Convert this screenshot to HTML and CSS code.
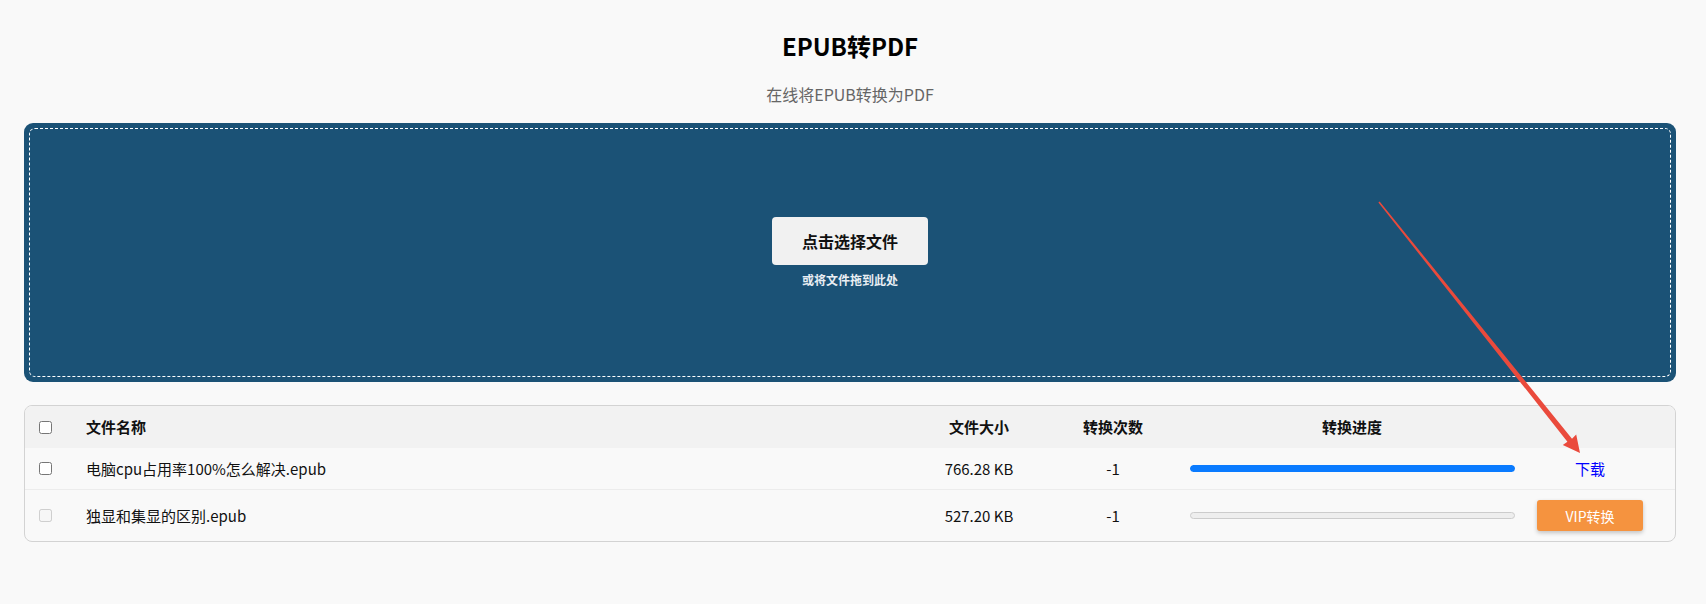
FILE: index.html
```html
<!DOCTYPE html>
<html lang="zh-CN">
<head>
<meta charset="utf-8">
<title>EPUB转PDF</title>
<link rel="stylesheet" href="styles.css">
</head>
<body>
<div class="page">
  <header class="head">
    <h1 class="title">EPUB转PDF</h1>
    <p class="subtitle">在线将EPUB转换为PDF</p>
  </header>

  <section class="dropzone">
    <div class="dropzone-inner">
      <button class="pick-btn" type="button">点击选择文件</button>
      <div class="drop-hint">或将文件拖到此处</div>
    </div>
  </section>

  <section class="file-table">
    <div class="row row-head">
      <div class="cell cell-check"><input type="checkbox"></div>
      <div class="cell cell-name">文件名称</div>
      <div class="cell cell-center">文件大小</div>
      <div class="cell cell-center">转换次数</div>
      <div class="cell cell-center">转换进度</div>
      <div class="cell cell-center"></div>
    </div>
    <div class="row row-file">
      <div class="cell cell-check"><input type="checkbox"></div>
      <div class="cell cell-name">电脑cpu占用率100%怎么解决.epub</div>
      <div class="cell cell-center">766.28 KB</div>
      <div class="cell cell-center">-1</div>
      <div class="cell cell-center"><div class="progress"><div class="progress-fill" style="width:100%"></div></div></div>
      <div class="cell cell-center"><a class="download" href="#">下载</a></div>
    </div>
    <div class="row row-file row-last">
      <div class="cell cell-check"><input type="checkbox" disabled></div>
      <div class="cell cell-name">独显和集显的区别.epub</div>
      <div class="cell cell-center">527.20 KB</div>
      <div class="cell cell-center">-1</div>
      <div class="cell cell-center"><div class="progress progress-empty"></div></div>
      <div class="cell cell-center"><button class="vip-btn" type="button">VIP转换</button></div>
    </div>
  </section>
</div>

<svg class="arrow-overlay" width="1706" height="604" viewBox="0 0 1706 604">
  <polygon fill="#ea4a3c" points="1379.6,201.5 1572,438.7 1576.2,434.4 1580,453 1562.8,445 1567.4,441.8 1378.4,202.5"/>
</svg>
</body>
</html>
```

FILE: styles.css
```css
* {
  box-sizing: border-box;
}

html, body {
  margin: 0;
  padding: 0;
  background: #f9f9f9;
}

body {
  font-family: "Noto Sans CJK SC", "Noto Sans", sans-serif;
  color: #111;
  position: relative;
  width: 1706px;
  height: 604px;
  overflow: hidden;
}

.page {
  width: 1652px;
  margin-left: 24px;
  padding-top: 30px;
}

.head {
  text-align: center;
}

.title {
  margin: 0;
  font-size: 24px;
  line-height: 32px;
  font-weight: 700;
  color: #000;
}

.subtitle {
  margin: 22px 0 0;
  font-size: 16px;
  line-height: 20px;
  color: #666;
}

.dropzone {
  margin-top: 19px;
  height: 259px;
  background: #1b5276;
  border-radius: 9px;
  padding: 5px;
}

.dropzone-inner {
  height: 100%;
  border: 1px dashed #ffffff;
  border-radius: 6px;
  display: flex;
  flex-direction: column;
  align-items: center;
  justify-content: center;
}

.pick-btn {
  font-family: inherit;
  font-size: 16px;
  font-weight: 700;
  line-height: 24px;
  color: #111;
  background: #f1f1f1;
  border: none;
  border-radius: 4px;
  padding: 12px 30px;
  width: 156px;
  height: 48px;
  cursor: pointer;
}

.drop-hint {
  margin-top: 6px;
  font-size: 12px;
  line-height: 17px;
  font-weight: 700;
  color: #e9eef3;
}

.file-table {
  margin-top: 23px;
  border: 1px solid #d3d3d3;
  border-radius: 8px;
  overflow: hidden;
  background: #f9f9f9;
}

.row {
  display: grid;
  grid-template-columns: 61px 1fr 134px 134px 344px 132px;
  padding-right: 19px;
  align-items: center;
}

.row-head {
  height: 42px;
  background: #f2f2f2;
  font-weight: 700;
  font-size: 15px;
}

.row-file {
  height: 42px;
  font-size: 15px;
  border-bottom: 1px solid #ececec;
}

.row-last {
  height: 51px;
  border-bottom: none;
}

.cell {
  line-height: 20px;
}

.cell-check {
  padding-left: 14px;
  display: flex;
  align-items: center;
}

.cell-check input {
  margin: 0;
  width: 13px;
  height: 13px;
}

.cell-center {
  text-align: center;
  display: flex;
  justify-content: center;
  align-items: center;
}

.progress {
  width: 325px;
  height: 7px;
  border-radius: 4px;
  background: #eeeeee;
  overflow: hidden;
}

.progress-fill {
  height: 100%;
  background: #0a7bff;
  border-radius: 4px;
}

.progress-empty {
  border: 1px solid #cccccc;
}

.download {
  color: #0000ff;
  text-decoration: none;
  font-size: 15px;
}

.vip-btn {
  font-family: inherit;
  font-size: 14px;
  line-height: 20px;
  color: #fff;
  background: #f5933f;
  border: none;
  border-radius: 3px;
  width: 106px;
  height: 31px;
  box-shadow: 0 2px 4px rgba(0, 0, 0, 0.22);
  cursor: pointer;
}

.arrow-overlay {
  position: absolute;
  left: 0;
  top: 0;
  pointer-events: none;
}
```
